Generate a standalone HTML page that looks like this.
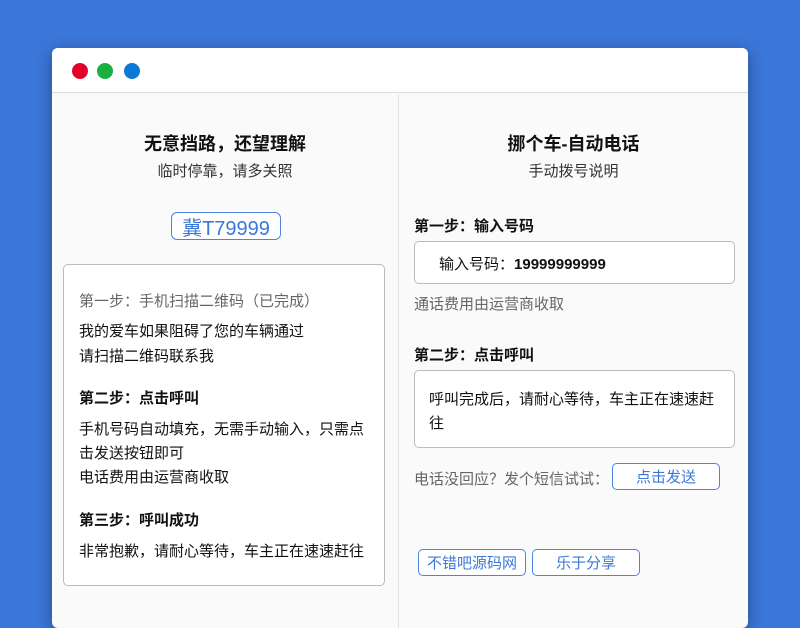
<!DOCTYPE html>
<html><head><meta charset="utf-8"><style>
*{margin:0;padding:0;box-sizing:border-box}
body{width:800px;height:600px;overflow:hidden;background:#3b76d9;font-family:"Liberation Sans","Noto Sans CJK SC",sans-serif;color:#111;position:relative}
.win{position:absolute;left:52px;top:48px;width:696px;height:580px;background:#fafafa;border-radius:6px;box-shadow:0 4px 16px rgba(0,0,0,.35);overflow:hidden}
.bar{position:absolute;left:0;top:0;width:696px;height:45px;background:#fff;border-bottom:1px solid #ddd}
.dot{position:absolute;top:15px;width:16px;height:16px;border-radius:50%}
.div{position:absolute;left:346px;top:46px;width:1px;height:540px;background:#e2e2e2}
.t{position:absolute;white-space:nowrap;font-size:15px}
.c{text-align:center}
.b{font-weight:bold}
.btn{position:absolute;border:1.5px solid #4a86e0;border-radius:5px;color:#3a78d8;font-size:15px;display:flex;align-items:center;justify-content:center;background:#fff}
.box{position:absolute;border:1.5px solid #bbb;border-radius:5px;background:#fff}
</style></head><body>
<div class="win">
<div class="bar"></div>
<div class="dot" style="left:20px;background:#e4002b"></div>
<div class="dot" style="left:45px;background:#1aaf3e"></div>
<div class="dot" style="left:72px;background:#0a78d4"></div>
<div class="div"></div>

<div class="t c b" style="left:0;width:346px;top:82px;font-size:18px">无意挡路，还望理解</div>
<div class="t c" style="left:0;width:346px;top:112px;color:#333">临时停靠，请多关照</div>
<div class="btn" style="left:119px;top:164px;width:110px;height:28px;font-size:20px;border-radius:6px">冀T79999</div>

<div class="box" style="left:11px;top:216px;width:322px;height:322px"></div>
<div class="t" style="left:27px;top:242px;color:#666">第一步：手机扫描二维码（已完成）</div>
<div class="t" style="left:27px;top:272px">我的爱车如果阻碍了您的车辆通过</div>
<div class="t" style="left:27px;top:297px">请扫描二维码联系我</div>
<div class="t b" style="left:27px;top:339px">第二步：点击呼叫</div>
<div class="t" style="left:27px;top:370px">手机号码自动填充，无需手动输入，只需点</div>
<div class="t" style="left:27px;top:394px">击发送按钮即可</div>
<div class="t" style="left:27px;top:418px">电话费用由运营商收取</div>
<div class="t b" style="left:27px;top:461px">第三步：呼叫成功</div>
<div class="t" style="left:27px;top:492px">非常抱歉，请耐心等待，车主正在速速赶往</div>

<div class="t c b" style="left:347px;width:349px;top:82px;font-size:18px">挪个车-自动电话</div>
<div class="t c" style="left:347px;width:349px;top:112px;color:#333">手动拨号说明</div>
<div class="t b" style="left:362px;top:167px">第一步：输入号码</div>
<div class="box" style="left:362px;top:193px;width:321px;height:43px"></div>
<div class="t" style="left:387px;top:205px">输入号码：<b>19999999999</b></div>
<div class="t" style="left:362px;top:245px;color:#666">通话费用由运营商收取</div>
<div class="t b" style="left:362px;top:296px">第二步：点击呼叫</div>
<div class="box" style="left:362px;top:322px;width:321px;height:78px"></div>
<div class="t" style="left:377px;top:340px">呼叫完成后，请耐心等待，车主正在速速赶</div>
<div class="t" style="left:377px;top:364px">往</div>
<div class="t" style="left:362px;top:420px;color:#666">电话没回应？发个短信试试：</div>
<div class="btn" style="left:560px;top:415px;width:108px;height:27px">点击发送</div>
<div class="btn" style="left:366px;top:501px;width:108px;height:27px">不错吧源码网</div>
<div class="btn" style="left:480px;top:501px;width:108px;height:27px">乐于分享</div>
</div>
</body></html>
